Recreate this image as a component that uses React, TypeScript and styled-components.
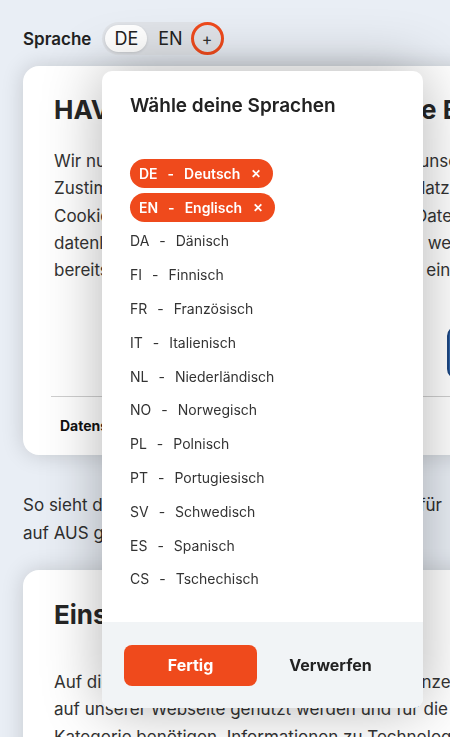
import React from "react";
import styled, { createGlobalStyle } from "styled-components";

const Global = createGlobalStyle`
  html, body { margin: 0; padding: 0; }
  body {
    background: #e9eef5;
    font-family: Inter, "Noto Sans", "Liberation Sans", sans-serif;
    color: #2b2b2b;
    overflow: hidden;
    width: 450px;
    height: 737px;
  }
`;

const Page = styled.div`
  padding: 22px 0 0 23px;
  width: 600px;
`;

const LangRow = styled.div`
  display: flex;
  align-items: center;
  gap: 11px;
  height: 33px;
`;

const LangLabel = styled.span`
  font-size: 17px;
  font-weight: 600;
  color: #222;
`;

const Toggle = styled.div`
  display: flex;
  align-items: center;
  background: #e0e3e8;
  border-radius: 17px;
  padding: 0 0 0 3px;
  height: 33px;
  box-sizing: border-box;
`;

const Seg = styled.span<{ $active?: boolean }>`
  font-size: 18px;
  color: #222;
  padding: 0 ${(p) => (p.$active ? "9px" : "0")};
  margin-right: ${(p) => (p.$active ? "11px" : "8px")};
  height: 27px;
  display: flex;
  align-items: center;
  border-radius: 14px;
  background: ${(p) => (p.$active ? "#fff" : "transparent")};
  box-shadow: ${(p) => (p.$active ? "0 1px 3px rgba(0,0,0,0.12)" : "none")};
`;

const PlusBtn = styled.span`
  width: 27px;
  height: 27px;
  border: 3.5px solid #ef4a1c;
  border-radius: 50%;
  display: flex;
  align-items: center;
  justify-content: center;
  font-size: 16px;
  color: #333;
  line-height: 1;
`;

const Card = styled.div<{ $mt: number }>`
  margin-top: ${(p) => p.$mt}px;
  width: 540px;
  background: #fff;
  border-radius: 16px;
  box-shadow: 0 0 22px rgba(0, 0, 0, 0.16);
  padding: 28px 0 0 31px;
  box-sizing: border-box;
  overflow: hidden;
`;

const Card1 = styled(Card)`
  height: 389px;
`;

const Card2 = styled(Card)`
  height: 260px;
  padding-top: 29px;
`;

const Heading = styled.h2`
  margin: 0;
  font-size: 26px;
  line-height: 32px;
  font-weight: 700;
  color: #262626;
  white-space: nowrap;
`;

const Para = styled.p<{ $mt: number }>`
  margin: ${(p) => p.$mt}px 0 0;
  font-size: 17px;
  line-height: 27.3px;
  color: #333;
  white-space: nowrap;
`;

const Line = styled.span`
  display: block;
`;

const ButtonRow = styled.div`
  margin-top: 42px;
  padding-left: 393px;
  height: 53px;
  display: flex;
`;

const BlueBtn = styled.span`
  width: 160px;
  height: 53px;
  border-radius: 10px;
  background: #2f64a8;
  border: 2px solid #1c4680;
  box-sizing: border-box;
`;

const Sep = styled.div`
  margin: 17px 0 0 -3px;
  height: 1px;
  background: #cfcfcf;
`;

const FootLinks = styled.div`
  margin-top: 20px;
  padding-left: 6px;
  font-size: 14px;
  font-weight: 700;
  color: #111;
`;

const Outside = styled.p`
  margin: 36px 0 0;
  font-size: 17px;
  line-height: 28px;
  color: #2f2f2f;
  white-space: nowrap;
`;

const Modal = styled.div`
  position: fixed;
  left: 102px;
  top: 71px;
  width: 321px;
  height: 637px;
  background: #fff;
  border-radius: 10px;
  box-shadow: 0 0 60px rgba(0, 0, 0, 0.3);
  display: flex;
  flex-direction: column;
  overflow: hidden;
`;

const ModalBody = styled.div`
  flex: 1;
  padding: 23px 28px 0;
`;

const ModalTitle = styled.h3`
  margin: 0;
  font-size: 19px;
  line-height: 24px;
  font-weight: 600;
  color: #222;
`;

const List = styled.div`
  margin-top: 38.5px;
  display: flex;
  flex-direction: column;
`;

const Row = styled.div`
  height: 33.8px;
  display: flex;
  align-items: center;
`;

const Item = styled.span<{ $selected?: boolean }>`
  height: 29px;
  display: inline-flex;
  align-items: center;
  gap: 10px;
  font-size: 14px;
  white-space: nowrap;
  color: ${(p) => (p.$selected ? "#fff" : "#333")};
  font-weight: ${(p) => (p.$selected ? 600 : 400)};
  background: ${(p) => (p.$selected ? "#ef4a1c" : "transparent")};
  border-radius: 15px;
  padding: ${(p) => (p.$selected ? "0 12px 0 9px" : "0")};
`;

const Close = styled.span`
  margin-left: 1px;
  font-size: 12px;
  font-weight: 800;
`;

const ModalFooter = styled.div`
  height: 86px;
  background: #f1f4f6;
  display: flex;
  align-items: center;
  gap: 7px;
  padding: 0 22px;
`;

const FooterBtn = styled.span<{ $primary?: boolean }>`
  width: 133px;
  height: 41px;
  border-radius: 8px;
  display: flex;
  align-items: center;
  justify-content: center;
  font-size: 16px;
  font-weight: 700;
  color: ${(p) => (p.$primary ? "#fff" : "#222")};
  background: ${(p) => (p.$primary ? "#ef4a1c" : "transparent")};
`;

const selected = [
  ["DE", "Deutsch"],
  ["EN", "Englisch"],
];

const others = [
  ["DA", "Dänisch"],
  ["FI", "Finnisch"],
  ["FR", "Französisch"],
  ["IT", "Italienisch"],
  ["NL", "Niederländisch"],
  ["NO", "Norwegisch"],
  ["PL", "Polnisch"],
  ["PT", "Portugiesisch"],
  ["SV", "Schwedisch"],
  ["ES", "Spanisch"],
  ["CS", "Tschechisch"],
];

export default function App() {
  return (
    <>
      <Global />
      <Page>
        <LangRow>
          <LangLabel>Sprache</LangLabel>
          <Toggle>
            <Seg $active>DE</Seg>
            <Seg>EN</Seg>
            <PlusBtn>+</PlusBtn>
          </Toggle>
        </LangRow>

        <Card1 $mt={11}>
          <Heading>HAVIS nutzt Cookies für deine Bessere Erfahrung</Heading>
          <Para $mt={22}>
            <Line>Wir nutzen Cookies und ähnliche Dienste auf unserer Webseite.</Line>
            <Line>Zustimmung vorausgesetzt nutzen wir auch Platzhalter und</Line>
            <Line>Cookies, um Inhalte klar zu individualisieren. Daten werden</Line>
            <Line>datenlokal verarbeiten wir nur, wenn wir diese weitergeben</Line>
            <Line>bereitstellen dürfen und Sie uns dies vorab so eindeutig</Line>
          </Para>
          <ButtonRow>
            <BlueBtn />
          </ButtonRow>
          <Sep />
          <FootLinks>Datenschutzerklärung · Impressum</FootLinks>
        </Card1>

        <Outside>
          So sieht die Cookie-Auswahl dann aus, wenn Sie für
          <br />
          auf AUS gestellt haben und nichts ändern.
        </Outside>

        <Card2 $mt={23}>
          <Heading>Einstellungen verwalten</Heading>
          <Para $mt={38}>
            <Line>Auf dieser Seite können Sie so jederzeit die einzelnen</Line>
            <Line>auf unserer Webseite genutzt werden und für die</Line>
            <Line>Kategorie benötigen. Informationen zu Technologien</Line>
          </Para>
        </Card2>
      </Page>

      <Modal>
        <ModalBody>
          <ModalTitle>Wähle deine Sprachen</ModalTitle>
          <List>
            {selected.map(([c, n]) => (
              <Row key={c}>
                <Item $selected>
                  <span>{c}</span>
                  <span>-</span>
                  <span>{n}</span>
                  <Close>✕</Close>
                </Item>
              </Row>
            ))}
            {others.map(([c, n]) => (
              <Row key={c}>
                <Item>
                  <span>{c}</span>
                  <span>-</span>
                  <span>{n}</span>
                </Item>
              </Row>
            ))}
          </List>
        </ModalBody>
        <ModalFooter>
          <FooterBtn $primary>Fertig</FooterBtn>
          <FooterBtn>Verwerfen</FooterBtn>
        </ModalFooter>
      </Modal>
    </>
  );
}
